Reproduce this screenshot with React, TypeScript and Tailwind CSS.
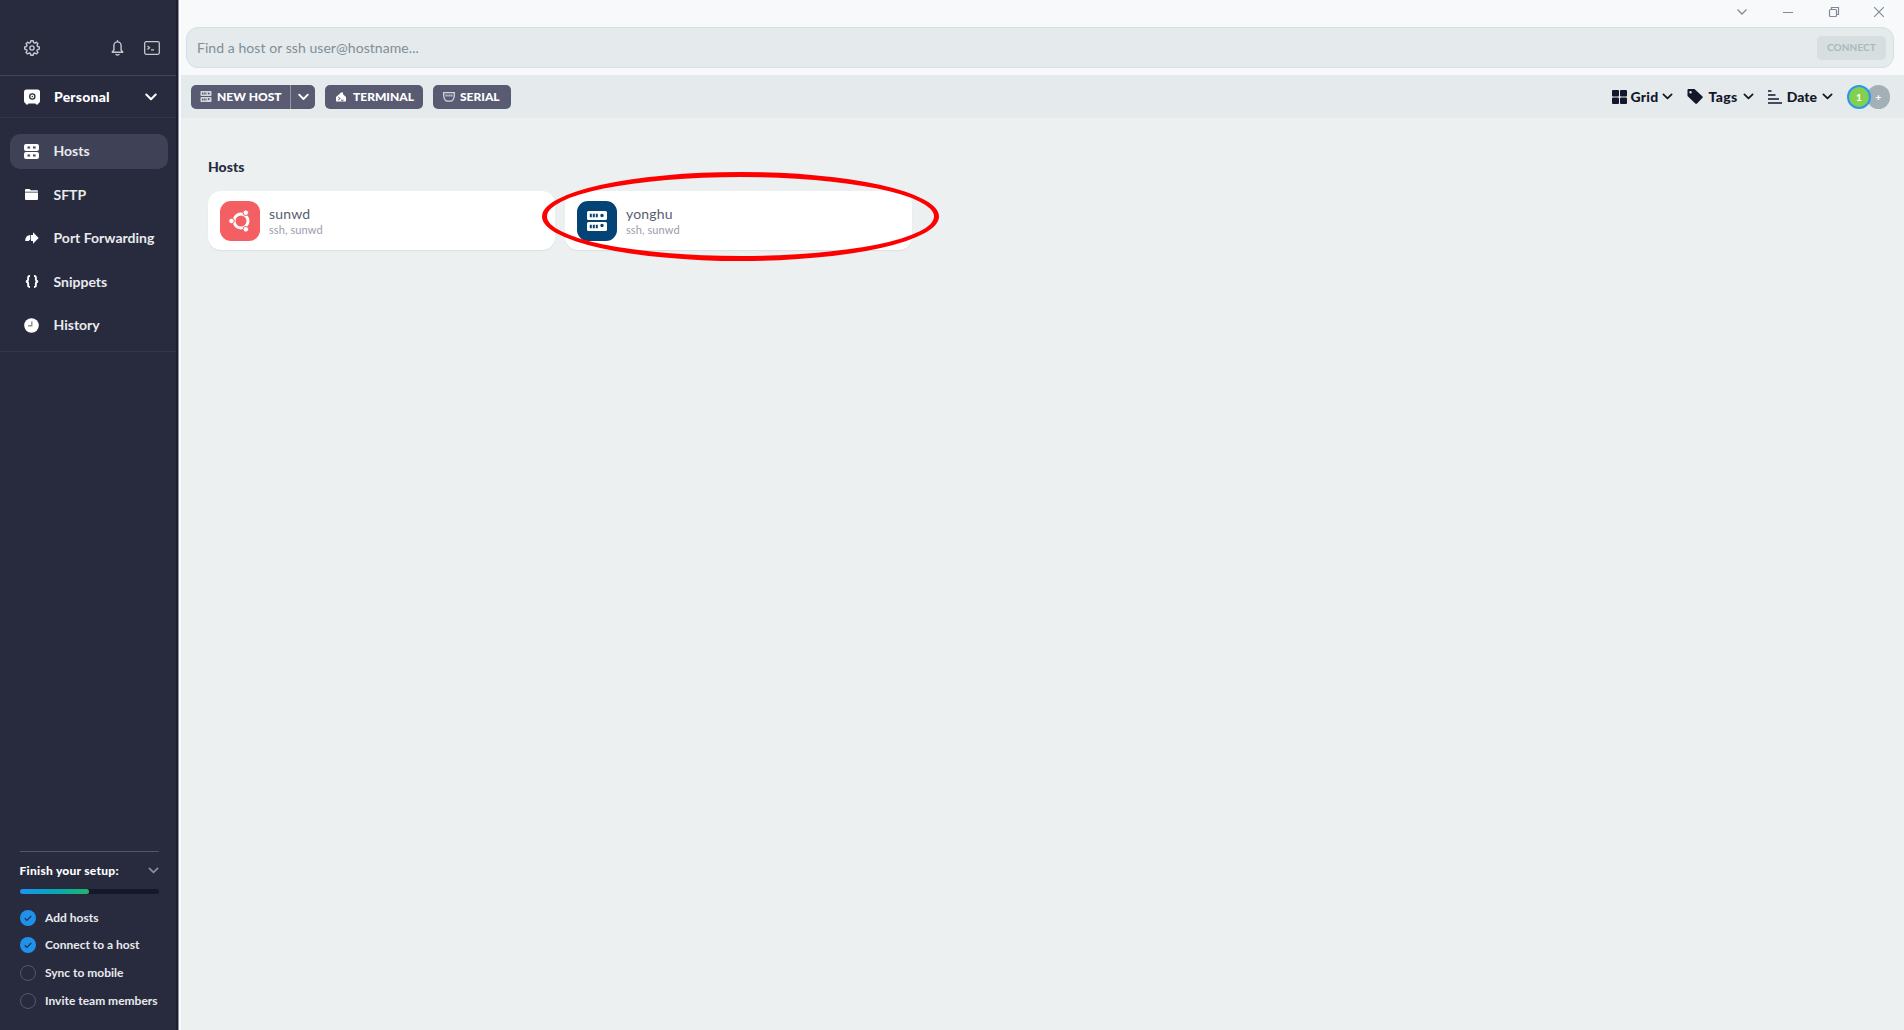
import type { ReactNode } from 'react'

const ServerIcon = ({ className }: { className: string }) => (
  <svg className={className} viewBox="0 0 20 20" fill="currentColor">
    <path
      fillRule="evenodd"
      d="M1.500 0h17a1.500 1.500 0 0 1 1.500 1.500v6a1.500 1.500 0 0 1-1.500 1.500H1.500a1.500 1.500 0 0 1-1.500-1.500V1.500a1.500 1.500 0 0 1 1.500-1.500ZM2.800 2.700v3.600h2V2.700ZM5.800 2.700v3.600h2V2.700ZM8.800 2.700v3.600h2V2.700ZM15 2.800a1.700 1.700 0 1 0 0 3.400a1.700 1.700 0 1 0 0-3.400Z"
    />
    <path
      fillRule="evenodd"
      d="M1.500 11h17a1.500 1.500 0 0 1 1.500 1.500v6a1.500 1.500 0 0 1-1.500 1.500H1.500a1.500 1.500 0 0 1-1.500-1.500v-6a1.500 1.500 0 0 1 1.500-1.500ZM2.800 13.700v3.600h2v-3.600ZM5.800 13.700v3.600h2v-3.600ZM8.800 13.700v3.600h2v-3.600ZM15 12.800a1.700 1.700 0 1 0 0 3.400a1.700 1.700 0 1 0 0-3.400Z"
    />
  </svg>
)

const HostsIcon = () => (
  <svg className="w-[15px] h-[15px]" viewBox="0 0 15 15" fill="currentColor">
    <path
      fillRule="evenodd"
      d="M2 0h11a2 2 0 0 1 2 2v3a2 2 0 0 1-2 2H2a2 2 0 0 1-2-2V2a2 2 0 0 1 2-2ZM3.500 2.400v2.200h2.600V2.400ZM9 2.400v2.200h2.600V2.400Z"
    />
    <path
      fillRule="evenodd"
      d="M2 8h11a2 2 0 0 1 2 2v3a2 2 0 0 1-2 2H2a2 2 0 0 1-2-2v-3a2 2 0 0 1 2-2ZM3.500 10.400v2.200h2.600v-2.200ZM9 10.400v2.200h2.600v-2.200Z"
    />
  </svg>
)

const Chevron = ({ className }: { className: string }) => (
  <svg
    className={className}
    viewBox="0 0 12 8"
    fill="none"
    stroke="currentColor"
    strokeLinecap="round"
    strokeLinejoin="round"
  >
    <path d="M1.300 1.500 6 6.200l4.700-4.700" />
  </svg>
)

const GearIcon = () => (
  <svg className="w-4 h-4" viewBox="0 0 16 16" fill="none" stroke="currentColor" strokeWidth="1.4" strokeLinejoin="round">
    <path d="M6.900.8h2.200l.5 1.800 1.200.5 1.600-.9 1.500 1.500-.9 1.600.5 1.200 1.800.4v2.200l-1.800.5-.5 1.200.9 1.600-1.500 1.500-1.600-.9-1.200.5-.5 1.800H6.900l-.5-1.800-1.200-.5-1.600.9-1.500-1.500.9-1.600-.5-1.200L.7 9.100V6.900l1.800-.4.5-1.200-.9-1.600 1.500-1.500 1.600.9 1.200-.5Z" />
    <circle cx="8" cy="8" r="2.100" />
  </svg>
)

const BellIcon = () => (
  <svg className="w-[13px] h-4" viewBox="0 0 13 16" fill="none" stroke="currentColor" strokeWidth="1.4" strokeLinecap="round">
    <path d="M6.500.8v1M2.900 10V5.800a3.600 3.900 0 0 1 7.200 0V10l1.700 2.200H1.200Z" strokeLinejoin="round" />
    <path d="M5 14.500q1.500 1.200 3 0" />
  </svg>
)

const ConsoleIcon = () => (
  <svg className="w-4 h-[14px]" viewBox="0 0 16 14" fill="none" stroke="currentColor" strokeWidth="1.3">
    <rect x=".7" y=".7" width="14.600" height="12.600" rx="1.500" />
    <path d="m3.500 5 2 1.700-2 1.700M7 8.800h3" />
  </svg>
)

const VaultIcon = () => (
  <svg className="w-4 h-4" viewBox="0 0 16 16">
    <path
      fill="#fff"
      d="M2.500.5h11a2.500 2.500 0 0 1 2.500 2.500v9a2.500 2.500 0 0 1-1.500 2.300L14 15.500h-2l-.5-1h-7l-.5 1H2l-.5-1.200A2.500 2.500 0 0 1 0 12V3A2.500 2.500 0 0 1 2.500.5Z"
    />
    <circle cx="8.300" cy="7.500" r="2.600" fill="none" stroke="#282b3e" strokeWidth="1.300" />
    <circle cx="8.300" cy="7.500" r=".7" fill="#282b3e" />
  </svg>
)

const UbuntuIcon = () => (
  <svg className="w-6 h-6" viewBox="0 0 24 24" fill="none" stroke="#fff">
    <circle cx="13" cy="12" r="7" strokeWidth="3" />
    <g fill="#fff" stroke="#f35f62" strokeWidth="1">
      <circle cx="3.500" cy="12" r="2.800" />
      <circle cx="17.800" cy="3.700" r="2.800" />
      <circle cx="17.800" cy="20.300" r="2.800" />
    </g>
  </svg>
)

const navItems: { label: string; icon: ReactNode; active?: boolean }[] = [
  { label: 'Hosts', icon: <HostsIcon />, active: true },
  {
    label: 'SFTP',
    icon: (
      <svg className="w-[13px] h-[11px]" viewBox="0 0 13 11">
        <path
          fill="currentColor"
          d="M0 2.800V1a1 1 0 0 1 1-1h3.500l1.300 1.300H12a1 1 0 0 1 1 1v.5ZM0 3.600h13V10a1 1 0 0 1-1 1H1a1 1 0 0 1-1-1Z"
        />
      </svg>
    ),
  },
  {
    label: 'Port Forwarding',
    icon: (
      <svg className="w-[14px] h-3" viewBox="0 0 14 12">
        <path fill="currentColor" d="M8 .3 13.700 6 8 11.700V9H6V3H8ZM5.300 3v4.500L3.500 9H.3C.3 5.500 2 3.200 5.300 3Z" />
      </svg>
    ),
  },
  {
    label: 'Snippets',
    icon: (
      <svg className="w-[14px] h-[13px]" viewBox="0 0 14 13" fill="none" stroke="currentColor" strokeWidth="1.9">
        <path d="M5 1C2.500 1 3.200 2.500 3.200 4S3 6.200 1 6.500C3 6.800 3.200 7.500 3.200 9S2.500 12 5 12M9 1c2.500 0 1.800 1.500 1.800 3s.2 2.200 2.200 2.500c-2 .3-2.200 1-2.200 2.500s.7 3-1.800 3" />
      </svg>
    ),
  },
  {
    label: 'History',
    icon: (
      <svg className="w-[15px] h-[15px]" viewBox="0 0 15 15">
        <circle cx="7.500" cy="7.500" r="7.300" fill="currentColor" />
        <path d="M7.800 3.500v4.300H4" fill="none" stroke="#8b8d9b" strokeWidth="1.400" />
      </svg>
    ),
  },
]

const setupSteps = [
  { label: 'Add hosts', done: true },
  { label: 'Connect to a host', done: true },
  { label: 'Sync to mobile', done: false },
  { label: 'Invite team members', done: false },
]

const Sidebar = () => (
  <aside className="w-[179px] h-full shrink-0 border-r border-[#9293a0] text-[#e9eaee] whitespace-nowrap">
    <div className="flex flex-col h-full border-r-2 border-[#1d1e32] bg-[#282b3e]">
      <div className="h-[76px] shrink-0 border-b border-[#414457] flex items-end pb-[19px] pl-[24px] pr-4 text-[#c6c8d0]">
        <GearIcon />
        <div className="ml-auto flex items-center gap-5">
          <BellIcon />
          <ConsoleIcon />
        </div>
      </div>
      <div className="h-[42px] shrink-0 border-b border-[#33364a] flex items-center pl-[24px] pr-[19px] text-white font-black">
        <VaultIcon />
        <div className="ml-[14px] text-sm tracking-[0.2px]">Personal</div>
        <Chevron className="ml-auto w-3 h-2 stroke-2" />
      </div>
      <nav className="h-[234px] shrink-0 border-b border-[#33364a] pt-[15.5px] pl-[10px] pr-2 flex flex-col gap-[8.6px] font-bold text-sm">
        {navItems.map((item) => (
          <div
            key={item.label}
            className={
              item.active
                ? 'h-[35px] shrink-0 rounded-[10px] flex items-center bg-[#3f4257]'
                : 'h-[35px] shrink-0 flex items-center'
            }
          >
            <div className="w-[15px] ml-[14px] mr-[14.5px] flex justify-center text-white">{item.icon}</div>
            {item.label}
          </div>
        ))}
      </nav>
      <div className="mt-auto ml-[19.5px] mr-[17px] border-t border-[#555869] pb-[15.5px] font-bold text-xs">
        <div className="h-[37px] flex items-center justify-between text-white font-black tracking-[0.27px]">
          Finish your setup:
          <Chevron className="w-[11px] h-[7px] stroke-2 text-[#8b8d9c]" />
        </div>
        <div className="h-[5px] rounded-full bg-[#15172a] mb-[9.500px]">
          <div className="h-full w-1/2 rounded-full bg-linear-to-r from-[#2091f6] to-[#21b568]"></div>
        </div>
        {setupSteps.map((step) => (
          <div key={step.label} className="h-[27.700px] flex items-center gap-[9.500px]">
            {step.done ? (
              <svg className="w-4 h-4" viewBox="0 0 17 17" fill="none">
                <circle cx="8.500" cy="8.500" r="8.500" fill="#2091eb" />
                <path d="m5 8.800 2.300 2.300 4.700-4.700" stroke="#1f3552" strokeWidth="1.300" />
              </svg>
            ) : (
              <div className="w-4 h-4 rounded-full border-[1.500px] border-[#55586a]"></div>
            )}
            {step.label}
          </div>
        ))}
      </div>
    </div>
  </aside>
)

const TopBar = () => (
  <header className="h-[75px] shrink-0 bg-[#f8f9fb] pl-[5px] pr-[10px]">
    <div className="h-[27px] pb-[3px] pr-[9px] flex items-center justify-end text-[#7f8c96]">
      <svg className="w-3 h-3 mr-[35px]" viewBox="0 0 12 12" fill="none" stroke="currentColor" strokeWidth="1.300">
        <path d="m1.500 3.500 4.500 4.500 4.500-4.500" />
      </svg>
      <svg className="w-[10px] h-3 mr-[35px]" viewBox="0 0 10 12" stroke="currentColor">
        <path d="M0 6.500h10" />
      </svg>
      <svg className="w-3 h-3 mr-[33px]" viewBox="0 0 12 12" fill="none" stroke="currentColor" strokeWidth="1.200">
        <rect x="1.500" y="3.500" width="7" height="7" rx="1" />
        <path d="M3.500 3.500v-2h7v7h-2" />
      </svg>
      <svg className="w-3 h-3" viewBox="0 0 12 12" fill="none" stroke="currentColor" strokeWidth="1.200">
        <path d="m1.200 1.200 9.600 9.600M10.800 1.200l-9.600 9.600" />
      </svg>
    </div>
    <div className="h-[41px] rounded-xl border border-[#d5dfe1] bg-[#e5eaec] flex items-center justify-between pl-[10px] pr-[7px] text-sm tracking-[0.06px] text-[#7f8e98]">
      Find a host or ssh user@hostname...
      <div className="w-[69px] h-6 rounded-[5px] bg-[#d6dee0] flex items-center justify-center text-[#a9b8bd] font-bold text-[10px] tracking-[0.1px]">
        CONNECT
      </div>
    </div>
  </header>
)

const Toolbar = () => (
  <div className="h-[43px] shrink-0 bg-[#e5eaec] flex items-center pl-[10px] pr-[14px] text-[#14172b] font-black whitespace-nowrap">
    <div className="flex items-center gap-[10px] text-white text-xs">
      <div className="flex w-[124px] h-6 rounded-[5px] bg-[#585b71]">
        <div className="flex items-center pl-[9px] gap-[5px] w-[100px] border-r border-[#9698a8]">
          <ServerIcon className="w-[12px] h-[11px] text-[#d5d6dd]" />
          NEW HOST
        </div>
        <div className="grow flex items-center justify-center">
          <Chevron className="w-[11px] h-2 stroke-2" />
        </div>
      </div>
      <div className="flex items-center gap-[7px] pl-[11px] w-[98px] h-6 rounded-[5px] bg-[#585b71]">
        <svg className="w-[10px] h-[10px]" viewBox="0 0 10 10">
          <path
            fill="currentColor"
            fillRule="evenodd"
            d="M0 5 4 1.500 5 .5h2v1.800L10 5v4.500H0ZM2.200 5.500l1.300 1-1.300 1v1l2.500-2-2.500-2ZM5 8.700h2.500v-.9H5Z"
          />
        </svg>
        TERMINAL
      </div>
      <div className="flex items-center gap-[5px] pl-[10px] w-[78px] h-6 rounded-[5px] bg-[#585b71]">
        <svg className="w-3 h-[10px] text-[#d5d6dd]" viewBox="0 0 12 10" fill="none" stroke="currentColor" strokeWidth="1.300">
          <path d="M.7.7h10.600v3q-.6 5.500-4 5.500H4.700q-3.400 0-4-5.500Z" />
          <path d="M2.500 3.500h7" strokeDasharray="1.200 .7" strokeWidth="1.800" />
        </svg>
        SERIAL
      </div>
    </div>
    <div className="ml-auto flex items-center text-sm">
      <svg className="w-[15px] h-[14px] mr-1" viewBox="0 0 15 14" fill="currentColor">
        <rect width="7" height="6.500" rx="1" />
        <rect x="8" width="7" height="6.500" rx="1" />
        <rect y="7.500" width="7" height="6.500" rx="1" />
        <rect x="8" y="7.500" width="7" height="6.500" rx="1" />
      </svg>
      <span className="tracking-[0.2px]">Grid</span>
      <Chevron className="w-[11px] h-[7px] stroke-2 ml-1 mr-[14px]" />
      <svg className="w-4 h-[15px] mr-[5px]" viewBox="0 0 16 15">
        <path
          fill="currentColor"
          fillRule="evenodd"
          d="M1 0h6.500L15.300 7.300a1.200 1.200 0 0 1 0 1.700L10 14.500a1.200 1.200 0 0 1-1.700 0L.5 7V.8ZM3.500 2a1.200 1.200 0 1 0 0 2.400a1.200 1.200 0 1 0 0-2.400Z"
        />
      </svg>
      <span className="tracking-[0.4px]">Tags</span>
      <Chevron className="w-[11px] h-[7px] stroke-2 ml-[5px] mr-[14px]" />
      <svg className="w-[14px] h-[14px] mr-[5px]" viewBox="0 0 14 14" stroke="currentColor" strokeWidth="1.700">
        <path d="M0 1h3.500M0 5h7.500M0 9h11M0 13h14" />
      </svg>
      Date
      <Chevron className="w-[11px] h-[7px] stroke-2 ml-[5px] mr-[14px]" />
      <div className="relative z-10 w-6 h-6 rounded-full border-2 border-[#2d96ee] bg-[#83d04e] text-white text-[10px] leading-none flex items-center justify-center">
        1
      </div>
      <div className="w-[23px] h-6 -ml-[4px] rounded-full bg-[#a3b0b6] text-white text-[10px] leading-none flex items-center justify-center">
        +
      </div>
    </div>
  </div>
)

const HostCard = ({ name, children }: { name: string; children: ReactNode }) => (
  <div className="w-[347px] h-[59px] rounded-[13px] bg-white shadow-[0_1px_1px_#d9e0e2] flex items-center pl-3">
    {children}
    <div className="ml-[9px]">
      <div className="text-sm leading-[17px] tracking-[0.2px] text-[#5a5d71]">{name}</div>
      <div className="text-[11px] leading-[15px] tracking-[0.1px] text-[#9a9dac]">ssh, sunwd</div>
    </div>
  </div>
)

export default function App() {
  return (
    <div className="w-[1904px] h-[1030px] flex overflow-hidden bg-[#ecf0f1] font-['Lato',sans-serif]">
      <Sidebar />
      <main className="relative grow flex flex-col border-l-2 border-[#fbfcfc]">
        <TopBar />
        <Toolbar />
        <section className="pl-[27px] pt-[40px]">
          <h2 className="text-[#282b3e] font-black text-sm leading-[18px] mb-[15px]">Hosts</h2>
          <div className="flex gap-[10px]">
            <HostCard name="sunwd">
              <div className="w-10 h-10 rounded-[11px] bg-[#f35f62] flex items-center justify-center">
                <UbuntuIcon />
              </div>
            </HostCard>
            <HostCard name="yonghu">
              <div className="w-10 h-10 rounded-[11px] bg-[#044376] flex items-center justify-center text-white">
                <ServerIcon className="w-5 h-5" />
              </div>
            </HostCard>
          </div>
        </section>
        {/* highlight around the second host */}
        <div className="absolute left-[361px] top-[172px] w-[397px] h-[89px] rounded-[50%] border-[5px] border-[#ff0000]"></div>
      </main>
    </div>
  )
}
